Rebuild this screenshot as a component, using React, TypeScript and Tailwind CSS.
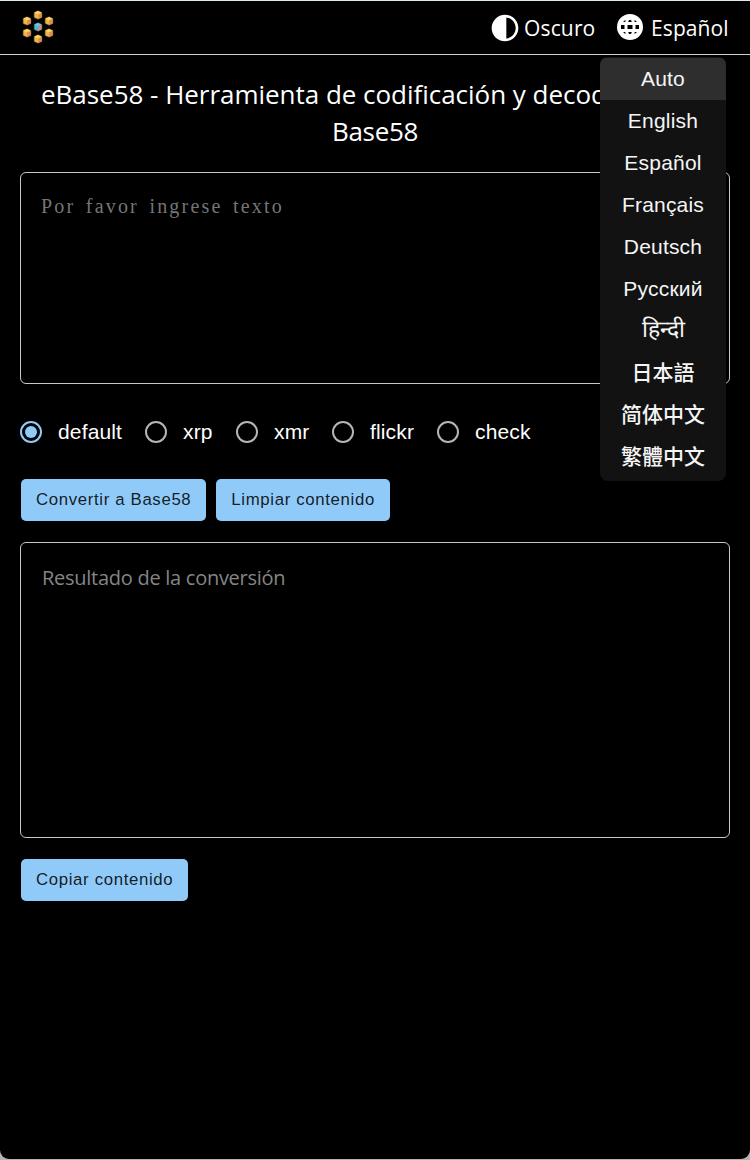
import { useState } from 'react';

const languages = ['Auto', 'English', 'Español', 'Français', 'Deutsch', 'Русский', 'हिन्दी', '日本語', '简体中文', '繁體中文'];
const alphabets = [
  { name: 'default', width: 'w-[125px]' },
  { name: 'xrp', width: 'w-[91px]' },
  { name: 'xmr', width: 'w-[96px]' },
  { name: 'flickr', width: 'w-[105px]' },
  { name: 'check', width: 'w-[105px]' },
];

function languageStyle(index: number) {
  if (index === 0) return 'h-[42px] bg-[#2e2e2e] tracking-[0.2px]';
  if (index === 6) return 'h-[42px] text-[23px] leading-[38px]';
  if (index > 6) return 'h-[42px] font-medium leading-[41px]';
  return 'h-[42px] tracking-[0.2px]';
}

function Cube({ x, y, top, left, right }: { x: number; y: number; top: string; left: string; right: string }) {
  return (
    <g transform={`translate(${x} ${y})`}>
      <path d="M0-4.200 3.900-2.500V2.500L0 4.200-3.900 2.500V-2.500Z" fill={left} stroke="#5d5237" strokeWidth=".6" />
      <path d="M0-4 3.600-2.400 0-.6-3.600-2.400Z" fill={top} />
      <path d="M.2-.4 3.600-2V2.300L.2 4Z" fill={right} />
    </g>
  );
}

function Logo() {
  const nodes = [[18, 7], [29, 13], [29, 25], [18, 31], [7, 25], [7, 13]];
  return (
    <svg className="mb-[2px] h-[38px] w-9" viewBox="0 0 36 38">
      {nodes.map(([x, y]) => (
        <Cube key={`${x}-${y}`} x={x} y={y} top="#f9d565" left="#efb93f" right="#e08a5c" />
      ))}
      <Cube x={18} y={19} top="#6cc9e6" left="#4bb6dc" right="#d9877a" />
    </svg>
  );
}

function Contrast() {
  return (
    <svg className="h-8 w-8" viewBox="0 0 24 24" fill="#fff">
      <path d="M12 22c5.520 0 10-4.480 10-10S17.520 2 12 2 2 6.480 2 12s4.480 10 10 10zm1-17.930c3.940.49 7 3.850 7 7.930s-3.050 7.440-7 7.930V4.070z" />
    </svg>
  );
}

function Globe() {
  return (
    <svg className="mb-[2px] ml-px h-[26px] w-[26px]" viewBox="0 0 26 26">
      <circle cx="13" cy="13" r="13" fill="#fff" />
      <g fill="#000">
        <rect x="10.500" y="11" width="5" height="4" />
        <rect x="4" y="11" width="3.500" height="4" />
        <rect x="18.500" y="11" width="3.500" height="4" />
        <path d="M11.200 8 12 6h2l.8 2zM11.200 18h3.600L14 20h-2z" />
        <path d="M6 8 8.500 5.800 8.300 8zM20 8l-2.500-2.200.2 2.200zM6 18l2.500 2.200L8.300 18zM20 18l-2.500 2.200.2-2.200z" />
      </g>
    </svg>
  );
}

const button =
  "h-[42px] rounded-[5px] bg-[#90caf9] px-[15px] text-[16.800px] tracking-[0.65px] leading-[42px] text-black/87 font-['Liberation_Sans',sans-serif]";

export default function App() {
  const [alphabet, setAlphabet] = useState('default');
  return (
    <div className="h-[1160px] w-[750px] overflow-hidden bg-[#b5b3b3] font-['Open_Sans','Noto_Sans',sans-serif] text-white">
      <div className="h-[1159px] rounded-b-[9px] border-t border-[#dcebea] bg-black">
        <header className="relative flex h-[54px] items-center border-b border-[#d0d0c8] pl-5">
          <Logo />
          <div className="ml-[433px] flex w-[127px] items-center">
            <Contrast />
            <span className="ml-[3px] pt-[2px] text-[21px] tracking-[0.15px]">Oscuro</span>
          </div>
          <Globe />
          <span className="ml-[8px] pt-[2px] text-[21px] tracking-[0.1px]">Español</span>
          <ul className="absolute left-[600px] top-[56px] z-10 h-[424px] w-[126px] overflow-hidden rounded-[8px] bg-[#121212] pt-[1px] text-center font-['Liberation_Sans','Noto_Sans_CJK_SC',sans-serif] text-[21px] leading-[42px] text-[#f5f5f5]">
            {languages.map((language, i) => (
              <li key={language} className={languageStyle(i)}>
                {language}
              </li>
            ))}
          </ul>
        </header>
        <main className="px-5">
          <h1 className="pt-[21px] text-center text-[26px] leading-[37px]">
            <span className="-ml-[3px] tracking-[-0.03px]">eBase58 - Herramienta de codificación y decodificación</span>
            <br />
            <span className="tracking-[-0.3px]">Base58</span>
          </h1>
          <textarea
            className="mt-[22px] block h-[212px] w-full resize-none rounded-[6px] border border-[#c8c8c8] bg-black px-5 py-[20px] font-['Liberation_Serif',serif] text-[20px] leading-[26px] tracking-[2.200px] [word-spacing:3.200px] placeholder:text-[#757575]"
            placeholder="Por favor ingrese texto"
          />
          <div className="mt-[27px] flex h-[42px] items-center font-['Liberation_Sans',sans-serif] text-[21px] tracking-[0.15px]">
            {alphabets.map(({ name, width }) => (
              <label key={name} className={`flex items-center ${width}`} onClick={() => setAlphabet(name)}>
                <span className={name === alphabet ? 'flex size-[22px] items-center justify-center rounded-full border-2 border-[#90caf9]' : 'size-[22px] rounded-full border-2 border-[#b5b5b5]'}>
                  {name === alphabet && <span className="size-[12px] rounded-full bg-[#90caf9]" />}
                </span>
                <span className="ml-[16px]">{name}</span>
              </label>
            ))}
          </div>
          <div className="mt-[26px] flex gap-[10px] pl-px">
            <button className={button}>Convertir a Base58</button>
            <button className={button}>Limpiar contenido</button>
          </div>
          <div className="mt-[21px] h-[296px] rounded-[6px] border border-[#c8c8c8] px-[21px] pt-[20px] text-[20px] leading-[30px] tracking-[-0.27px] text-[#858585]">
            Resultado de la conversión
          </div>
          <div className="mt-[21px] flex pl-px">
            <button className={button}>Copiar contenido</button>
          </div>
        </main>
      </div>
    </div>
  );
}
